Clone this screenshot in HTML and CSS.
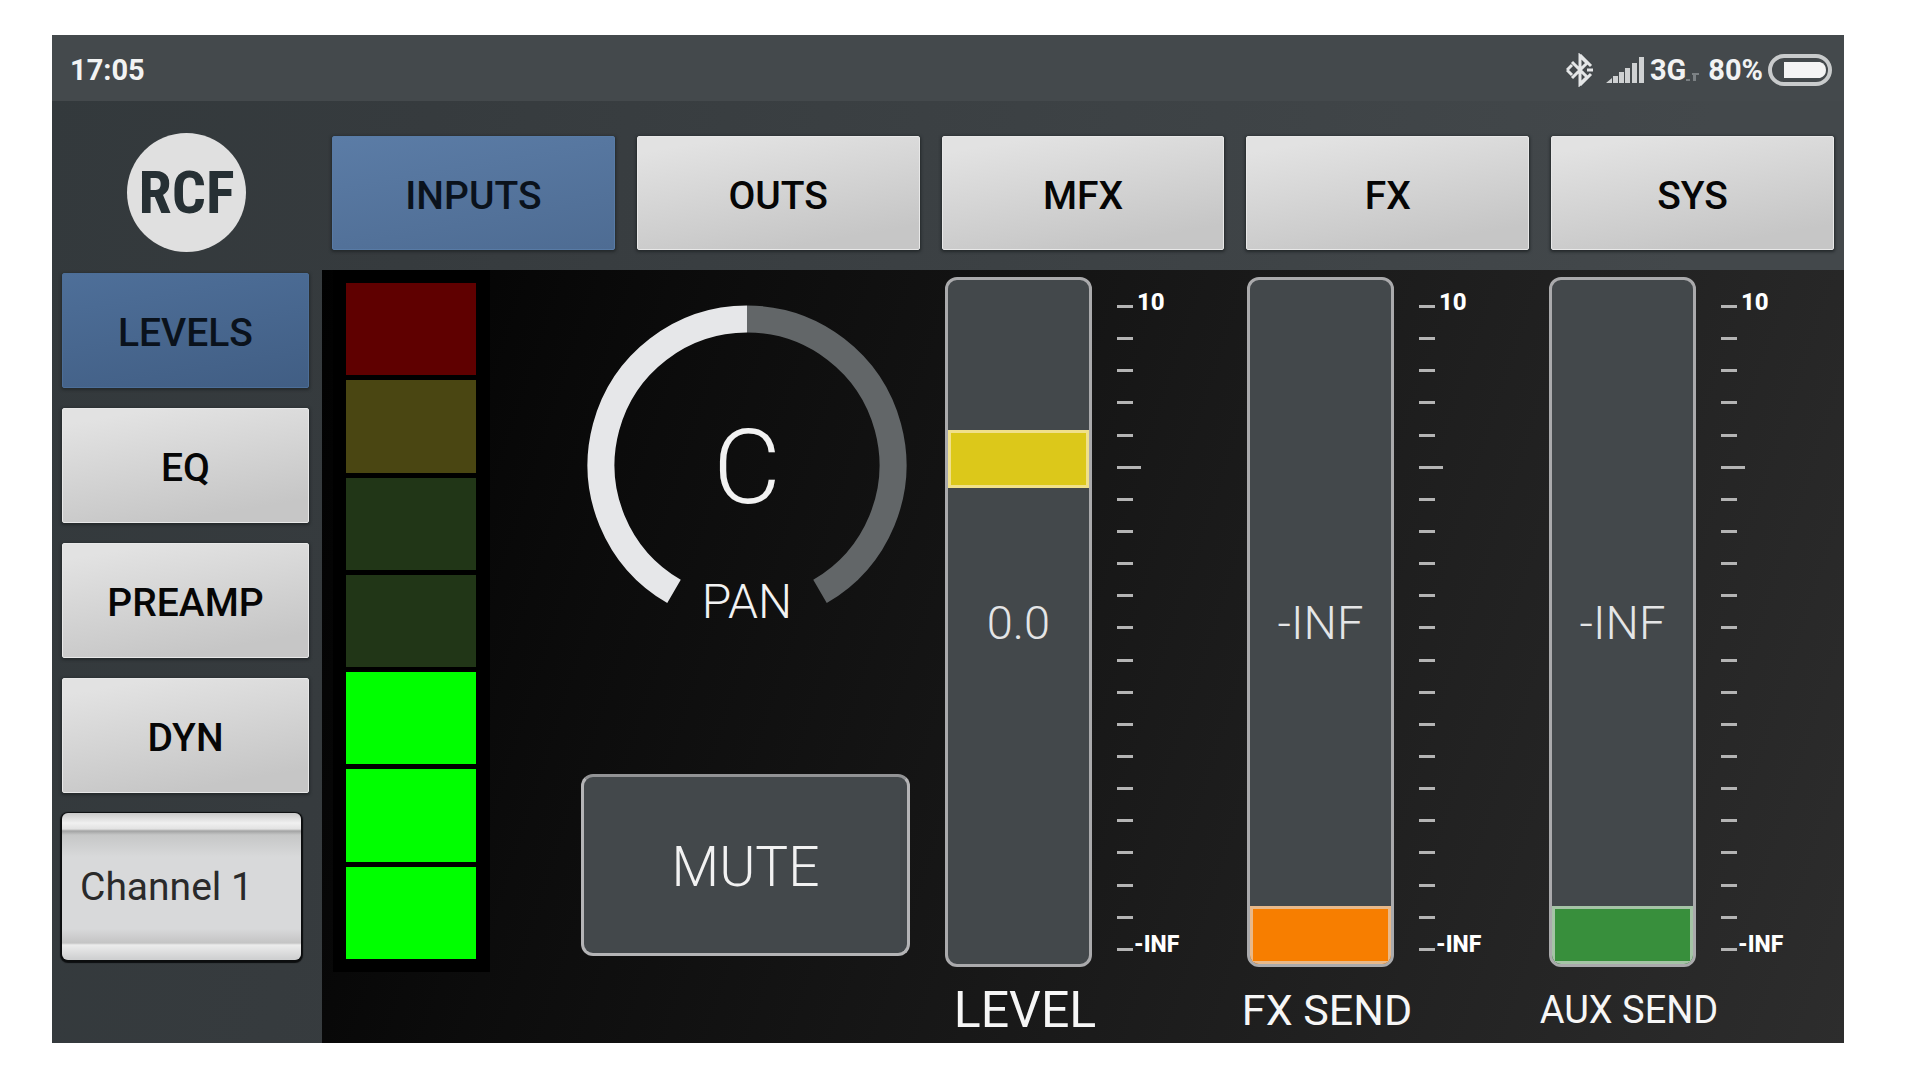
FILE: index.html
```html
<!DOCTYPE html>
<html lang="en">
<head>
<meta charset="utf-8">
<title>RCF Mixer</title>
<link rel="stylesheet" href="styles.css">
</head>
<body>
<div class="app">
  <header class="status">
    <span>17:05</span>
    <div class="status-icons">
      <svg width="28" height="34" viewBox="0 0 28 34" fill="none" stroke="#e4e6e7" stroke-width="3"><path d="M6 9l15 15-7 7V3l7 7L6 25"/><path d="M14 2l11 11M14 32l11-11M1 17l5-5M1 17l5 5M21 17h6" stroke-width="3"/></svg>
      <svg class="signal" width="40" height="28" viewBox="0 0 40 28" fill="#cfd1d2"><path d="M0 27l6-5v5zM7 20h5v7H7zM13 16h5v11h-5zM19 12h5v15h-5zM26 7h5v20h-5zM33 1h5v26h-5z"/></svg>
      <span>3G</span>
      <svg class="faint" width="14" height="14" viewBox="0 0 14 14" fill="#7b8083"><path d="M0 11h4v2H0zM6 5h7v2H6zM7 5h3v8H7z"/></svg>
      <span class="percent">80%</span>
      <svg width="64" height="32" viewBox="0 0 64 32"><rect x="2" y="2" width="60" height="28" rx="14" fill="none" stroke="#c9cbcc" stroke-width="4"/><path d="M16 8h36q6 2 6 8t-6 8H16z" fill="#f4f4f4"/></svg>
    </div>
  </header>

  <div class="top">
    <div class="logo">RCF</div>
    <nav class="tabs">
      <button class="btn active">INPUTS</button>
      <button class="btn">OUTS</button>
      <button class="btn">MFX</button>
      <button class="btn">FX</button>
      <button class="btn">SYS</button>
    </nav>
  </div>

  <div class="body">
    <aside class="side">
      <button class="btn active deep">LEVELS</button>
      <button class="btn">EQ</button>
      <button class="btn">PREAMP</button>
      <button class="btn">DYN</button>
      <button class="channel">Channel 1</button>
    </aside>

    <main class="panel">
      <div class="meter-col">
        <div class="meter">
          <i class="red"></i><i class="yellow"></i><i></i><i></i><i class="on"></i><i class="on"></i><i class="on"></i>
        </div>
      </div>

      <div class="pan-col">
        <svg class="dial" width="320" height="320" viewBox="0 0 320 320">
          <g fill="none" stroke-width="27">
            <path d="M161 15A146 146 0 0 1 234 287.4" stroke="#626668"/>
            <path d="M88 287.4A146 146 0 0 1 161 15" stroke="#e6e7e9"/>
          </g>
          <text class="dial-value" x="161" y="199">C</text>
          <text class="dial-name" x="161" y="314">PAN</text>
        </svg>
        <button class="mute">MUTE</button>
      </div>

      <section class="strip">
        <div class="strip-row">
          <div class="fader yellow-knob"><input id="level" type="range" min="0" max="100" value="76"><output for="level">0.0</output></div>
          <ul class="scale"><li>10</li><li></li><li></li><li></li><li></li><li class="zero"></li><li></li><li></li><li></li><li></li><li></li><li></li><li></li><li></li><li></li><li></li><li></li><li></li><li></li><li></li><li>-INF</li></ul>
        </div>
        <label class="large" for="level">LEVEL</label>
      </section>

      <section class="strip">
        <div class="strip-row">
          <div class="fader orange-knob"><input id="fx" type="range" min="0" max="100" value="0"><output for="fx">-INF</output></div>
          <ul class="scale"><li>10</li><li></li><li></li><li></li><li></li><li class="zero"></li><li></li><li></li><li></li><li></li><li></li><li></li><li></li><li></li><li></li><li></li><li></li><li></li><li></li><li></li><li>-INF</li></ul>
        </div>
        <label class="medium" for="fx">FX SEND</label>
      </section>

      <section class="strip">
        <div class="strip-row">
          <div class="fader green-knob"><input id="aux" type="range" min="0" max="100" value="0"><output for="aux">-INF</output></div>
          <ul class="scale"><li>10</li><li></li><li></li><li></li><li></li><li class="zero"></li><li></li><li></li><li></li><li></li><li></li><li></li><li></li><li></li><li></li><li></li><li></li><li></li><li></li><li></li><li>-INF</li></ul>
        </div>
        <label for="aux">AUX SEND</label>
      </section>
    </main>
  </div>
</div>
</body>
</html>
```
FILE: styles.css
```css
* { box-sizing: border-box; }

body {
  margin: 0;
  min-height: 100vh;
  padding: 35px 76px 37px 52px;
  display: flex;
  background: #fff;
  font-family: Roboto, "Liberation Sans", sans-serif;
}

button { font-family: inherit; border: 0; padding: 0; }

.app {
  flex: 1;
  display: flex;
  flex-direction: column;
  background: linear-gradient(100deg, #33393c 0%, #363b3e 20%, #43484b 85%, #43484b 100%);
}

.status {
  height: 66px;
  padding: 4px 12px 0 18px;
  display: flex;
  align-items: center;
  justify-content: space-between;
  background: #44494c;
  color: #f2f3f3;
  font-size: 29px;
  font-weight: 700;
}

.status-icons { display: flex; align-items: center; }
.signal { margin: 0 4px 0 12px; }
.faint { margin: 10px 0 0; }
.percent { margin: 0 5px 0 8px; }

.top {
  height: 169px;
  padding: 32px 10px 18px 0;
  display: grid;
  grid-template-columns: 280px 1fr;
}

.logo {
  width: 119px;
  height: 119px;
  margin-left: 75px;
  border-radius: 50%;
  background: #e0e0e0;
  color: #263034;
  display: flex;
  align-items: center;
  justify-content: center;
  font-family: "Liberation Sans Narrow", "Roboto Condensed", Roboto, sans-serif;
  font-size: 60px;
  font-weight: 700;
}

.tabs {
  display: grid;
  grid-template-columns: repeat(5, 1fr);
  gap: 22px;
  padding: 3px 0 2px;
}

.btn {
  padding-top: 4px;
  background: linear-gradient(170deg, #e2e2e2 10%, #c6c6c6 85%);
  border: 1px solid #e8e8e8;
  box-shadow: 0 1px 3px 1px #24292b;
  border-radius: 2px;
  color: #060606;
  font-size: 39px;
  font-weight: 500;
}

.btn.active {
  background: linear-gradient(170deg, #5b7ca6, #4e6c93);
  border-color: #587ba6;
  color: #0a121c;
}

.btn.deep { background: linear-gradient(170deg, #4e6f99, #415e84); border-color: #4c6e98; }

.tabs .btn { padding-top: 6px; }

.body {
  flex: 1;
  display: grid;
  grid-template-columns: 270px 1fr;
}

.side {
  padding: 3px 13px 0 10px;
  display: flex;
  flex-direction: column;
  gap: 20px;
}

.side .btn { height: 115px; }

.channel {
  height: 147px;
  margin-right: 8px;
  padding-left: 18px;
  border-radius: 6px;
  box-shadow: 0 1px 1px 2px #0c0e0f;
  background: linear-gradient(#c9c9c9 0, #f0f0f0 10px, #e2e2e2 16px, #a2a3a3 18px, #c6c7c7 22px, #d8d9da 44px, #d8d9da 116px, #c4c4c4 130px, #ececec 132px, #cfd0d1 146px);
  color: #2a2a2a;
  font-size: 39px;
  text-align: left;
}

.panel {
  display: grid;
  grid-template-columns: 168px 445fr repeat(3, 302fr);
  padding-right: 3px;
  background: linear-gradient(108deg, #010101 0%, #0c0c0c 22%, #1a1a1a 55%, #2d2d2d 100%);
}

.meter-col {
  padding: 0 0 71px 11px;
  display: flex;
}

.meter {
  flex: 1;
  padding: 13px 14px 13px 13px;
  display: flex;
  flex-direction: column;
  gap: 5px;
  background: #000;
}

.meter i { flex: 1; background: #213617; }
.meter .red { background: #5f0000; }
.meter .yellow { background: #4a4612; }
.meter .on { background: #0f0; }

.pan-col {
  padding: 34px 25px 87px 91px;
  display: flex;
  flex-direction: column;
  align-items: center;
  justify-content: space-between;
}

.dial { overflow: visible; }
.dial text { fill: #f2f2f2; text-anchor: middle; font-weight: 300; }
.dial-value { font-size: 104px; }
.dial-name { font-size: 48px; }

.mute {
  width: 100%;
  height: 182px;
  padding-top: 4px;
  border: 3px solid #b4b4b6;
  border-top-color: #929395;
  border-radius: 12px;
  background: #43484b;
  color: #f2f2f2;
  font-size: 55px;
  font-weight: 300;
}

.strip {
  padding: 7px 0 0 10px;
  display: flex;
  flex-direction: column;
}

.strip-row { flex: 1; display: flex; gap: 25px; }

.fader {
  position: relative;
  display: flex;
  width: 147px;
  border: 3px solid #aaaaac;
  border-radius: 12px;
  background: #43484b;
  overflow: hidden;
}

.fader input {
  appearance: none;
  writing-mode: vertical-lr;
  direction: rtl;
  width: 141px;
  min-height: 0;
  margin: 0;
  background: none;
}

.fader input::-webkit-slider-thumb {
  appearance: none;
  width: 141px;
  height: 58px;
  border: 3px solid #f0e08a;
  background: #dcc81a;
}

.orange-knob input::-webkit-slider-thumb { background: #f77e00; border-color: #e8b98a; }
.green-knob input::-webkit-slider-thumb { background: #388f3c; border-color: #a5c4a6; }

.fader output {
  position: absolute;
  inset: 0;
  display: flex;
  align-items: center;
  justify-content: center;
  color: #e4e5e6;
  font-size: 47px;
  font-weight: 300;
  pointer-events: none;
}

.scale {
  list-style: none;
  margin: 0;
  padding: 28px 0 16px;
  display: flex;
  flex-direction: column;
  justify-content: space-between;
}

.scale li {
  height: 3px;
  display: flex;
  align-items: flex-end;
  gap: 4px;
  color: #fff;
  font-size: 24px;
  font-weight: 800;
  line-height: 12px;
}

.scale li::before { content: ""; width: 16px; height: 3px; background: #b4b4b4; }
.scale li.zero::before { width: 24px; }
.scale li:last-child { gap: 1px; font-size: 23px; }

.strip label {
  width: 180px;
  height: 76px;
  margin-left: -10px;
  padding-top: 9px;
  display: flex;
  align-items: center;
  justify-content: center;
  color: #f6f6f6;
  font-size: 38px;
  white-space: nowrap;
}

.strip label.medium { font-size: 43px; }
.strip label.large { font-size: 50px; }
```
